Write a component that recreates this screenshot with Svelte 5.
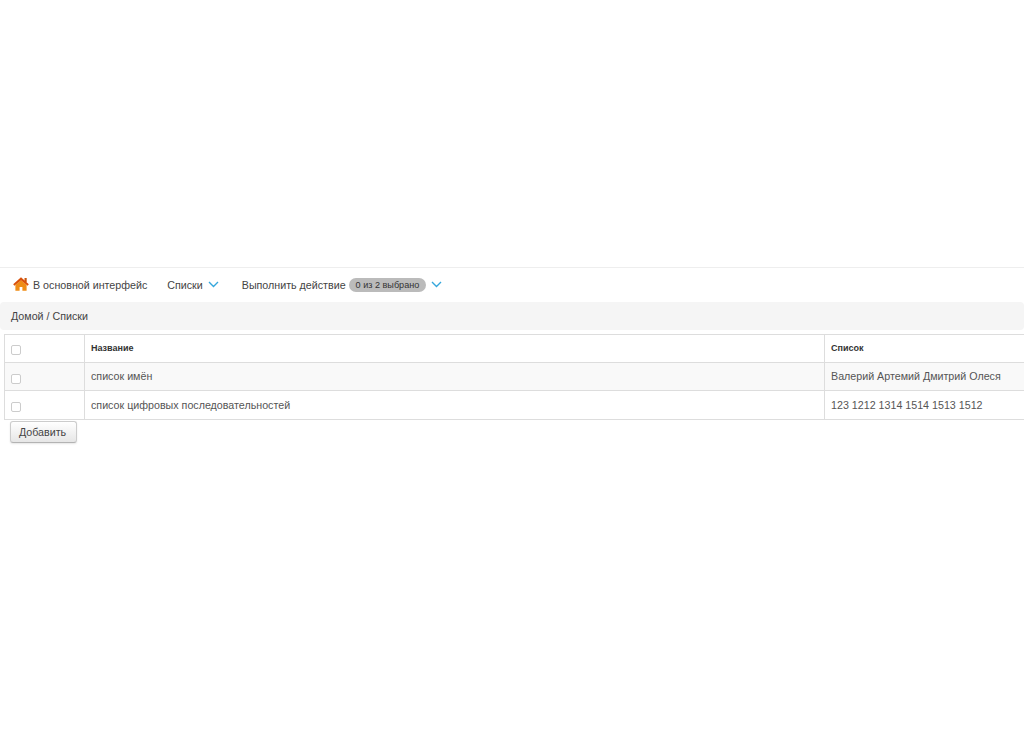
<script>
  const rows = [
    { name: 'список имён', list: 'Валерий Артемий Дмитрий Олеся' },
    { name: 'список цифровых последовательностей', list: '123 1212 1314 1514 1513 1512' }
  ];
</script>

<div class="page">
  <nav class="nav">
    <a class="item home">
      <svg width="16" height="14" viewBox="0 0 16 14" aria-hidden="true">
        <rect x="11.5" y="1" width="2.2" height="4" fill="#c9580f" />
        <path d="M8 3 L2.4 8 V13.7 H6.6 V10 H9.4 V13.7 H13.6 V8 Z" fill="#ef8d17" />
        <path d="M8 0.3 L0.2 7.2 L1.4 8.8 L8 3.2 L14.6 8.8 L15.8 7.2 Z" fill="#d9500a" />
      </svg>
      В основной интерфейс
    </a>
    <a class="item lists">
      Списки
      <svg class="chev" width="11" height="7" viewBox="0 0 11 7" aria-hidden="true"><path d="M1 1 L5.5 5.5 L10 1" /></svg>
    </a>
    <a class="item action">
      Выполнить действие
      <span class="badge">0 из 2 выбрано</span>
      <svg class="chev last" width="11" height="7" viewBox="0 0 11 7" aria-hidden="true"><path d="M1 1 L5.5 5.5 L10 1" /></svg>
    </a>
  </nav>

  <div class="crumbs">Домой / Списки</div>

  <div class="table">
    <div class="row head">
      <div class="cell check"><span class="box"></span></div>
      <div class="cell">Название</div>
      <div class="cell">Список</div>
    </div>
    {#each rows as r, i}
      <div class="row" class:odd={i === 0} class:tall={i === 1}>
        <div class="cell check"><span class="box"></span></div>
        <div class="cell">{r.name}</div>
        <div class="cell">{r.list}</div>
      </div>
    {/each}
  </div>

  <button class="add" type="button">Добавить</button>
</div>

<style>
  :global(body) {
    margin: 0;
    background: #fff;
    overflow: hidden;
  }
  .page {
    height: 738px;
    box-sizing: border-box;
    padding-top: 267px;
    font-family: "Liberation Sans", Arial, sans-serif;
    font-size: 10.7px;
    color: #444;
    overflow: hidden;
  }
  .nav {
    display: flex;
    align-items: center;
    height: 34px;
    border-top: 1px solid #eee;
    padding-left: 13px;
  }
  .item {
    display: flex;
    align-items: center;
    white-space: nowrap;
  }
  .home svg {
    margin-right: 4px;
    margin-top: -2px;
  }
  .lists {
    margin-left: 20px;
  }
  .action {
    margin-left: 23px;
  }
  .chev {
    fill: none;
    stroke: #35a7dc;
    stroke-width: 1.4;
    margin-top: -2px;
  }
  .lists .chev {
    margin-left: 5px;
  }
  .last {
    margin-left: 5px;
  }
  .badge {
    display: inline-block;
    margin-left: 3px;
    padding: 0 7px;
    height: 14px;
    line-height: 14px;
    border-radius: 7px;
    background: #bbb;
    font-size: 9.1px;
    color: #333;
  }
  .crumbs {
    height: 28px;
    line-height: 28px;
    padding-left: 11px;
    background: #f5f5f5;
    border-radius: 4px;
    color: #444;
  }
  .table {
    margin: 4px 0 0 4px;
    width: 1040px;
    border: 1px solid #ddd;
    border-bottom: 0;
    box-sizing: border-box;
  }
  .row {
    display: grid;
    grid-template-columns: 79px 740px 1fr;
    height: 27px;
    border-bottom: 1px solid #ddd;
    color: #555;
  }
  .row.tall {
    height: 28px;
  }
  .row.odd {
    background: #f9f9f9;
  }
  .head {
    color: #333;
    font-weight: 700;
    font-size: 9px;
  }
  .cell {
    display: flex;
    align-items: center;
    padding-left: 6px;
    padding-bottom: 1px;
    border-left: 1px solid #ddd;
    white-space: nowrap;
  }
  .cell.check {
    border-left: 0;
    padding: 3px 0 0 6px;
  }
  .odd .cell.check {
    padding-top: 5px;
  }
  .box {
    display: block;
    box-sizing: border-box;
    width: 10px;
    height: 10px;
    border: 1px solid #ccc;
    border-radius: 2px;
    background: #fff;
  }
  .add {
    display: block;
    margin: 1px 0 0 10px;
    width: 67px;
    height: 22px;
    padding: 0 2px 0 0;
    font: 10.7px "Liberation Sans", Arial, sans-serif;
    color: #444;
    border: 1px solid #ccc;
    border-bottom-color: #b3b3b3;
    border-radius: 3px;
    background: linear-gradient(#fff, #e6e6e6);
    box-shadow: 0 1px 2px rgba(0, 0, 0, 0.1);
  }
</style>
